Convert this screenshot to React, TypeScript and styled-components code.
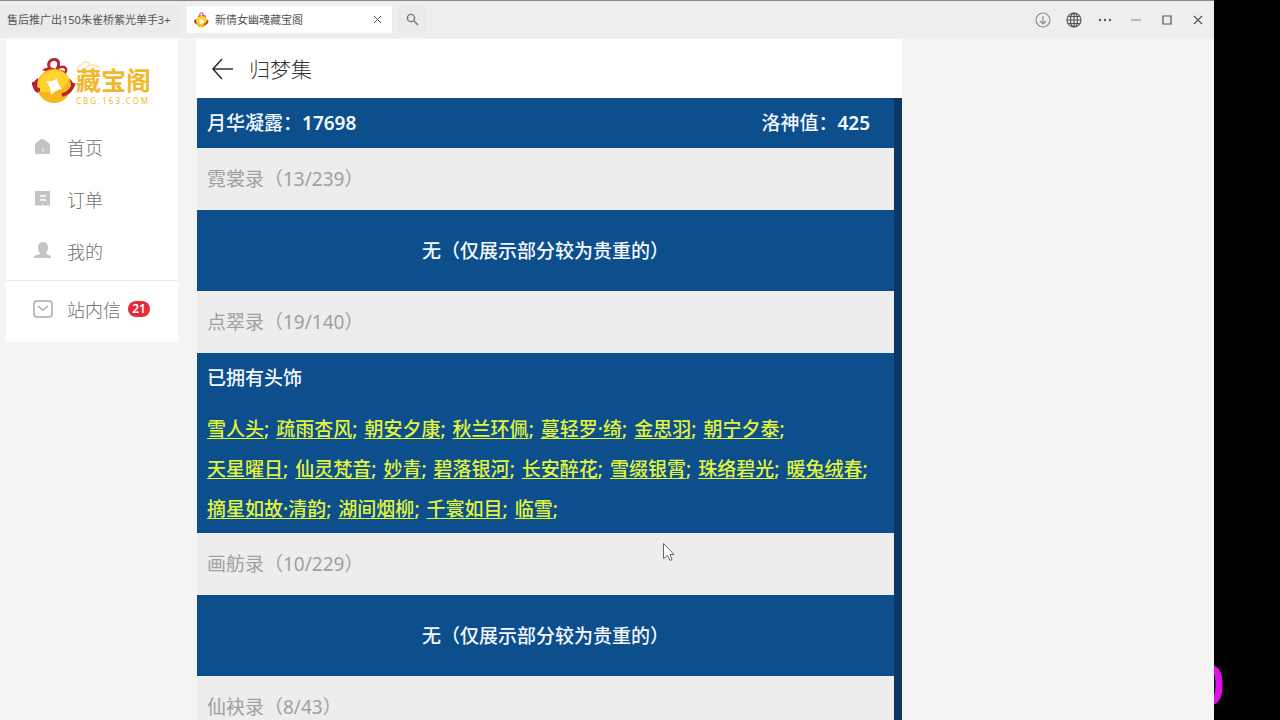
import React from "react";
import styled, { createGlobalStyle } from "styled-components";

const Global = createGlobalStyle`
  * { box-sizing: border-box; }
  body { margin: 0; background: #000; font-family: "Noto Sans", "Noto Sans CJK SC", sans-serif; }
  button { font: inherit; color: inherit; border: 0; padding: 0; margin: 0; background: none; }
  a { color: inherit; text-decoration: none; }
  h1, h2, h3, p { margin: 0; font-weight: inherit; }
  svg { display: block; flex: none; }
`;

const Screen = styled.div`
  display: flex;
  height: 100vh;
  overflow: hidden;
`;

const BrowserWindow = styled.div`
  flex: 1;
  min-width: 0;
  display: flex;
  flex-direction: column;
  background: #f4f4f4;
  border-top: 1px solid #8a8687;
`;

const Desktop = styled.aside`
  width: 66px;
  display: flex;
  align-items: flex-end;
  padding-bottom: 14px;
  background: #000;
`;

const TitleBar = styled.header`
  display: flex;
  height: 37px;
  flex: none;
  align-items: center;
  background: #eeeeee;
  color: #555;
`;

const Tab = styled.div<{ $active?: boolean }>`
  display: flex;
  align-items: center;
  width: ${(p) => (p.$active ? 205 : 181)}px;
  height: 27px;
  margin-right: 6px;
  padding: 0 8px 0 7px;
  gap: 6px;
  font-size: 11px;
  line-height: 27px;
  white-space: nowrap;
  overflow: hidden;
  background: ${(p) => (p.$active ? "#fff" : "#ebebeb")};
`;

const TabTitle = styled.span`
  flex: 1;
  overflow: hidden;
`;

const IconButton = styled.button`
  display: grid;
  place-items: center;
  width: 31px;
  height: 27px;
`;

const TabClose = styled(IconButton)`
  width: 14px;
`;

const SearchButton = styled(IconButton)`
  width: 28px;
  background: #ebebeb;
`;

const BackButton = styled(IconButton)`
  width: 22px;
`;

const WindowControls = styled.div`
  display: flex;
  margin-left: auto;
  padding-right: 1px;
`;

const Body = styled.div`
  flex: 1;
  min-height: 0;
  display: flex;
  align-items: flex-start;
  gap: 18px;
  padding: 1px 0 0 6px;
`;

const Sidebar = styled.nav`
  width: 172px;
  flex: none;
  background: #fff;
  padding: 18px 0 7px;
`;

const Brand = styled.a`
  display: flex;
  height: 64px;
  padding-left: 26px;
`;

const BrandText = styled.span`
  position: relative;
  display: flex;
  flex-direction: column;
  gap: 4px;
  padding-top: 10px;
  color: #f0b92b;
`;

const Cloud = styled.svg`
  position: absolute;
  left: 1px;
  top: 4px;
`;

const BrandName = styled.span`
  font-size: 25px;
  line-height: 26px;
  font-weight: 700;
`;

const BrandUrl = styled.span`
  font-size: 8px;
  line-height: 8px;
  letter-spacing: 2px;
`;

const NavItem = styled.a`
  display: flex;
  align-items: center;
  height: 52px;
  padding-left: 27px;
  gap: 14px;
  font-size: 18px;
  font-weight: 300;
  color: #707070;
`;

const Messages = styled.div`
  margin-top: 3px;
  border-top: 1px solid #e8e8e8;
  padding-top: 2px;
`;

const Count = styled.span`
  margin-left: -7px;
  width: 22px;
  height: 16px;
  border-radius: 8px;
  background: #e62a3a;
  color: #fff;
  font-size: 12px;
  line-height: 16px;
  font-weight: 600;
  text-align: center;
`;

const Main = styled.main`
  flex: 0 1 706px;
  min-width: 0;
  align-self: stretch;
  display: flex;
  flex-direction: column;
`;

const PageHead = styled.div`
  display: flex;
  align-items: center;
  flex: none;
  height: 59px;
  padding: 0 15px;
  gap: 16px;
  background: #fff;
  color: #333;
`;

const PageTitle = styled.h1`
  font-size: 21px;
  line-height: 30px;
  font-weight: 300;
`;

const Content = styled.div`
  flex: 1;
  overflow: hidden;
  margin-left: 1px;
  border-right: 8px solid #0a3763;
  background: #0d4e8d;
  color: #f4f8ff;
  font-size: 19px;
  line-height: 28px;
  font-weight: 500;
`;

const Summary = styled.div`
  display: flex;
  justify-content: space-between;
  align-items: center;
  height: 50px;
  padding: 0 24px 0 10px;
`;

const Amount = styled.b`
  font-weight: 600;
`;

const SectionHead = styled.h2`
  height: 62px;
  padding: 0 10px;
  font-size: 19px;
  line-height: 62px;
  font-weight: 400;
  color: #a0a0a0;
  background: #ededed;
`;

const Empty = styled.p`
  height: 81px;
  line-height: 82px;
  text-align: center;
`;

const Owned = styled.div`
  padding: 12px 10px 4px;
`;

const OwnedTitle = styled.h3`
  font-size: 19px;
  line-height: 26px;
  margin-bottom: 18px;
`;

const ItemRow = styled.div`
  display: flex;
  gap: 7px;
  height: 40px;
  line-height: 40px;
  white-space: nowrap;
  color: #e3f53a;
`;

const ItemLink = styled.a`
  text-decoration: underline;
  text-decoration-thickness: 1px;
  text-underline-offset: 2px;
`;

const Pointer = styled.svg`
  position: absolute;
  left: 662px;
  top: 542px;
`;

const Coin = ({ w, h }: { w: number; h: number }) => (
  <svg width={w} height={h} viewBox="0 0 44 48" aria-hidden="true">
    <path d="M19 13C14 7 18 2 23 2.500c5 .5 4 6 2 10" fill="none" stroke="#b52a33" strokeWidth="3" />
    <path d="M25 12c3-3 8-3 9 0s-1 4-4 4" fill="none" stroke="#b52a33" strokeWidth="2.500" />
    <path d="M10 13q5-4 11-2l11 3 3 4-12-1z" fill="#c32632" />
    <path d="M6 21C-1 25 0 34 6 36l5-3zM36 21c9 4 6 17-5 18l1-5z" fill="#b7202d" />
    <circle cx="22" cy="29" r="17" fill="#f7b51e" />
    <path d="M6 26a17 17 0 0 1 31-5C35 32 22 38 7 34z" fill="#ffd22c" />
    <path d="M1 25q2 8 7 8M30 38q9-2 12-12" fill="none" stroke="#b7202d" strokeWidth="3.500" />
    <path d="M14 24q7 1 11-3 0 5 5 11-6 0-11 6 0-8-5-14z" fill="#fff" />
  </svg>
);

const rows = [
  ["雪人头", "疏雨杏风", "朝安夕康", "秋兰环佩", "蔓轻罗·绮", "金思羽", "朝宁夕泰"],
  ["天星曜日", "仙灵梵音", "妙青", "碧落银河", "长安醉花", "雪缀银霄", "珠络碧光", "暖兔绒春"],
  ["摘星如故·清韵", "湖间烟柳", "千寰如目", "临雪"],
];

export default function App() {
  return (
    <Screen>
      <Global />
      <BrowserWindow>
        <TitleBar>
          <Tab>
            <TabTitle>售后推广出150朱雀桥紫光单手3+</TabTitle>
          </Tab>
          <Tab $active>
            <Coin w={15} h={16} />
            <TabTitle>新倩女幽魂藏宝阁</TabTitle>
            <TabClose aria-label="关闭标签">
              <svg width="9" height="9" viewBox="0 0 9 9" fill="none" stroke="#555"><path d="M1 1l7 7M8 1L1 8" /></svg>
            </TabClose>
          </Tab>
          <SearchButton aria-label="搜索">
            <svg width="13" height="13" viewBox="0 0 13 13" fill="none" stroke="#777" strokeWidth="1.4"><circle cx="5" cy="5" r="3.6" /><path d="M8 8l4 4" /></svg>
          </SearchButton>
          <WindowControls>
            <IconButton aria-label="下载">
              <svg width="16" height="16" viewBox="0 0 16 16" fill="none" stroke="#8c8c8c" strokeWidth="1.200"><circle cx="8" cy="8" r="7" /><path d="M8 4v8M5 9l3 3 3-3" /></svg>
            </IconButton>
            <IconButton aria-label="语言">
              <svg width="16" height="16" viewBox="0 0 16 16" fill="none" stroke="#555" strokeWidth="1.2"><circle cx="8" cy="8" r="7" /><ellipse cx="8" cy="8" rx="3.5" ry="7" /><path d="M8 1v14M1 8h14M2 4.500h12M2 11.500h12" /></svg>
            </IconButton>
            <IconButton aria-label="更多">
              <svg width="14" height="4" viewBox="0 0 14 4" fill="#555"><circle cx="2" cy="2" r="1.200" /><circle cx="7" cy="2" r="1.200" /><circle cx="12" cy="2" r="1.200" /></svg>
            </IconButton>
            <IconButton aria-label="最小化">
              <svg width="10" height="2" viewBox="0 0 10 2"><path d="M0 1h10" stroke="#888" /></svg>
            </IconButton>
            <IconButton aria-label="最大化">
              <svg width="10" height="10" viewBox="0 0 10 10"><path d="M1 1h8v8H1z" fill="none" stroke="#555" strokeWidth="1.2" /></svg>
            </IconButton>
            <IconButton aria-label="关闭">
              <svg width="10" height="10" viewBox="0 0 10 10"><path d="M1 1l8 8M9 1L1 9" stroke="#555" strokeWidth="1.2" /></svg>
            </IconButton>
          </WindowControls>
        </TitleBar>
        <Body>
          <Sidebar>
            <Brand href="#">
              <Coin w={44} h={48} />
              <BrandText>
                <Cloud width="24" height="11" viewBox="0 0 24 11" fill="none" stroke="#f5d47c" aria-hidden="true">
                  <path d="M1 9q-1-5 4-5 1-4 5-3 3 1 2 4-2 2-3 0M5 9q0-3 3-2 2 2 0 3M13 5q3-3 5 0 4-1 5 3M15 9q0-3 3-2" />
                </Cloud>
                <BrandName>藏宝阁</BrandName>
                <BrandUrl>CBG.163.COM</BrandUrl>
              </BrandText>
            </Brand>
            <NavItem href="#">
              <svg width="20" height="20" viewBox="0 0 20 20"><path d="M10 2l6 4q1 1 1 2v8q0 1-1 1H3q-1 0-1-1V8q0-1 1-2l5-4z" fill="#c4c4c4" /><path d="M10 11v4" stroke="#e4e4e4" strokeWidth="1.500" /></svg>
              首页
            </NavItem>
            <NavItem href="#">
              <svg width="20" height="20" viewBox="0 0 20 20"><path d="M2 2h15v15l-2-1-2 1-3-1-3 1-2-1-3 1z" fill="#c4c4c4" /><path d="M7 7h6M7 11h6" stroke="#fff" strokeWidth="1.500" /></svg>
              订单
            </NavItem>
            <NavItem href="#">
              <svg width="20" height="20" viewBox="0 0 20 20" fill="#c4c4c4"><path d="M10 1c4 0 5 3 5 6 0 2-1 4-2 5v1l5 2v2H1v-2l6-2v-1C6 11 5 9 5 7c0-3 1-6 5-6z" /></svg>
              我的
            </NavItem>
            <Messages>
              <NavItem href="#">
                <svg width="20" height="20" viewBox="0 0 20 20" fill="none" stroke="#aaa" strokeWidth="1.500"><rect x="1" y="2" width="18" height="16" rx="3" /><path d="M5 7l5 4 5-4" /></svg>
                站内信
                <Count>21</Count>
              </NavItem>
            </Messages>
          </Sidebar>
          <Main>
            <PageHead>
              <BackButton aria-label="返回">
                <svg width="22" height="22" viewBox="0 0 22 22" fill="none" stroke="#333" strokeWidth="1.600"><path d="M22 11H2M11 1L2 11l9 10" /></svg>
              </BackButton>
              <PageTitle>归梦集</PageTitle>
            </PageHead>
            <Content>
              <Summary>
                <span>月华凝露：<Amount>17698</Amount></span>
                <span>洛神值：<Amount>425</Amount></span>
              </Summary>
              <SectionHead>霓裳录（13/239）</SectionHead>
              <Empty>无（仅展示部分较为贵重的）</Empty>
              <SectionHead>点翠录（19/140）</SectionHead>
              <Owned>
                <OwnedTitle>已拥有头饰</OwnedTitle>
                {rows.map((row) => (
                  <ItemRow key={row[0]}>
                    {row.map((name) => (
                      <span key={name}><ItemLink href="#">{name}</ItemLink>;</span>
                    ))}
                  </ItemRow>
                ))}
              </Owned>
              <SectionHead>画舫录（10/229）</SectionHead>
              <Empty>无（仅展示部分较为贵重的）</Empty>
              <SectionHead>仙袂录（8/43）</SectionHead>
            </Content>
          </Main>
        </Body>
      </BrowserWindow>
      <Desktop>
        <svg width="10" height="42" viewBox="0 0 10 42" fill="none" stroke="#e010e8" strokeWidth="7"><path d="M-1 5q6 2 6 16T-1 37" /></svg>
      </Desktop>
      <Pointer width="14" height="20" viewBox="0 0 14 20" aria-hidden="true">
        <path d="M1.500 1.500v15l4-3 2.500 5 2-1-2-5h4z" fill="#fff" stroke="#666" />
      </Pointer>
    </Screen>
  );
}
